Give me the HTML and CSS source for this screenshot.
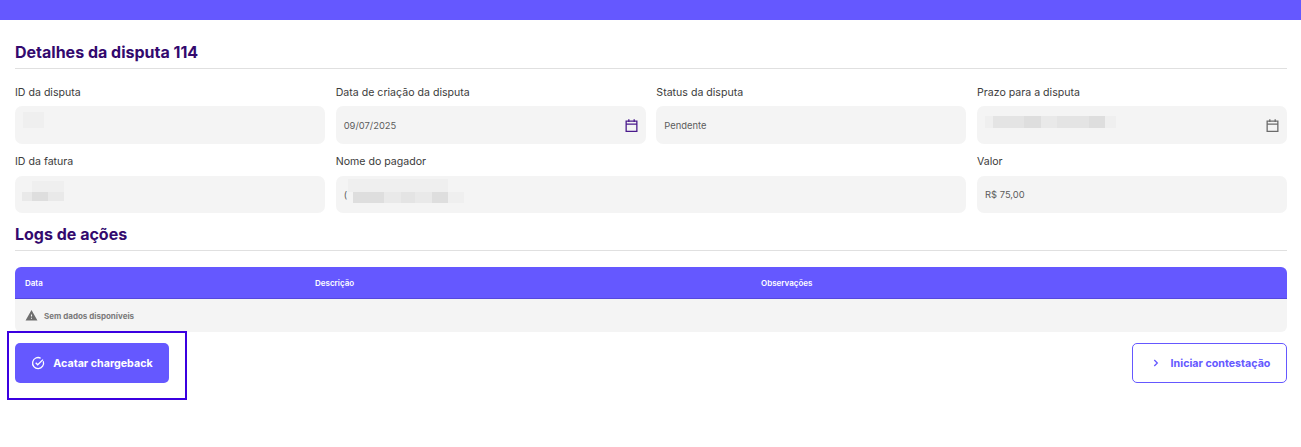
FILE: index.html
```html
<!DOCTYPE html>
<html lang="pt-BR">
<head>
    <meta charset="UTF-8">
    <meta name="viewport" content="width=device-width, initial-scale=1.0">
    <title>Detalhes da disputa</title>
    <link rel="stylesheet" href="styles.css">
</head>
<body>
    <header class="topbar"></header>

    <main class="content">
        <h2 class="section-title">Detalhes da disputa 114</h2>

        <div class="fields">
            <div class="field">
                <label>ID da disputa</label>
                <div class="input">
                    <div class="blur blur-id">
                        <div class="blur-row h16"><i class="b0 w21"></i></div>
                    </div>
                </div>
            </div>
            <div class="field">
                <label>Data de criação da disputa</label>
                <div class="input">
                    <span>09/07/2025</span>
                    <svg class="calendar calendar-on" viewBox="0 0 14 14"><path d="M2 3h10v9.500H2zM2 5.800h10M4.500 1.200v2.500M9.500 1.200v2.500"/></svg>
                </div>
            </div>
            <div class="field">
                <label>Status da disputa</label>
                <div class="input"><span>Pendente</span></div>
            </div>
            <div class="field">
                <label>Prazo para a disputa</label>
                <div class="input">
                    <div class="blur blur-prazo">
                        <div class="blur-row h12"><i class="b0 w8"></i><i class="b1 w31"></i><i class="b2 w17"></i><i class="b3 w16"></i><i class="b1 w32"></i><i class="b2 w16"></i><i class="b0 w11"></i></div>
                    </div>
                    <svg class="calendar" viewBox="0 0 14 14"><path d="M2 3h10v9.500H2zM2 5.800h10M4.500 1.200v2.500M9.500 1.200v2.500"/></svg>
                </div>
            </div>
            <div class="field">
                <label>ID da fatura</label>
                <div class="input input-low">
                    <div class="blur blur-fatura">
                        <div class="blur-row h11"><i class="w10"></i><i class="b0 w32"></i></div>
                        <div class="blur-row h9"><i class="b3 w10"></i><i class="b2 w16"></i><i class="b3 w16"></i></div>
                    </div>
                </div>
            </div>
            <div class="field span-2">
                <label>Nome do pagador</label>
                <div class="input input-low">
                    <span class="payer">(</span>
                    <div class="blur blur-payer">
                        <div class="blur-row h13"><i class="b0 w100"></i></div>
                        <div class="blur-row h11"><i class="w5"></i><i class="b2 w31"></i><i class="b3 w17"></i><i class="b1 w14"></i><i class="b3 w17"></i><i class="b2 w16"></i><i class="b0 w16"></i></div>
                    </div>
                </div>
            </div>
            <div class="field">
                <label>Valor</label>
                <div class="input input-low"><span>R$ 75,00</span></div>
            </div>
        </div>

        <h2 class="section-title logs-title">Logs de ações</h2>

        <div class="table">
            <div class="table-head">
                <span class="col-date">Data</span>
                <span class="col-desc">Descrição</span>
                <span>Observações</span>
            </div>
            <div class="table-empty">
                <svg class="warn" viewBox="0 0 24 24"><path d="M1 21h22L12 2 1 21zm12-3h-2v-2h2v2zm0-4h-2v-4h2v4z"/></svg>
                <span>Sem dados disponíveis</span>
            </div>
        </div>

        <div class="actions">
            <div class="highlight">
                <button class="btn btn-primary">
                    <svg class="btn-icon" viewBox="0 0 14 14"><path d="M12.300 5.300A5.500 5.500 0 1 1 9.700 2.200M4.700 6.800l2 2L12 3.600"/></svg>
                    Acatar chargeback
                </button>
            </div>
            <button class="btn btn-outline">
                <svg class="btn-icon" viewBox="0 0 14 14"><path d="M5.300 4l3 3-3 3"/></svg>
                Iniciar contestação
            </button>
        </div>
    </main>
</body>
</html>
```

FILE: styles.css
```css
* {
    box-sizing: border-box;
}
body {
    margin: 0;
    background-color: #fff;
    color: #333;
    font-family: Inter, "Liberation Sans", sans-serif;
}
.topbar {
    height: 20px;
    background-color: #6558ff;
}
.content {
    padding: 22px 14px 0 15px;
}
.section-title {
    margin: 0;
    padding-bottom: 6px;
    height: 27px;
    font-size: 16px;
    line-height: 20px;
    font-weight: 700;
    color: #33096e;
    border-bottom: 1px solid #e0e0e0;
}
.logs-title {
    margin-top: 11px;
}
.fields {
    display: grid;
    grid-template-columns: repeat(4, 1fr);
    column-gap: 10.67px;
    row-gap: 8px;
    margin-top: 14px;
}
.field label {
    display: block;
    height: 23px;
    font-size: 10.600px;
    line-height: 20px;
    color: #3c3c3c;
}
.field:nth-child(n+5) label {
    height: 24px;
}
.span-2 {
    grid-column: span 2;
}
.input {
    display: flex;
    align-items: center;
    justify-content: space-between;
    height: 38px;
    padding: 0 7px 0 8px;
    background-color: #f4f4f4;
    border-radius: 7px;
    font-size: 9.400px;
    color: #5c5c5c;
}
.input-low {
    height: 37px;
    justify-content: flex-start;
}
/* tarjas que escondem os dados do cliente */
.blur {
    align-self: flex-start;
}
.blur-id {
    margin-top: 6px;
}
.blur-prazo {
    margin-top: 10px;
}
.blur-fatura {
    margin-top: 5px;
    margin-left: -1px;
}
.blur-payer {
    margin-top: 3px;
}
.blur-row {
    display: flex;
}
.blur-row i {
    display: block;
}
.b0 { background-color: #efefef; }
.b1 { background-color: #e4e4e4; }
.b2 { background-color: #dedede; }
.b3 { background-color: #e9e9e9; }
.h9 { height: 9px; }
.h11 { height: 11px; }
.h12 { height: 12px; }
.h13 { height: 13px; }
.h16 { height: 16px; }
.w5 { width: 5px; }
.w8 { width: 8px; }
.w10 { width: 10px; }
.w11 { width: 11px; }
.w14 { width: 14px; }
.w16 { width: 16px; }
.w17 { width: 17px; }
.w21 { width: 21px; }
.w31 { width: 31px; }
.w32 { width: 32px; }
.w100 { width: 100px; }
.payer {
    width: 4px;
}
.calendar {
    width: 15px;
    height: 15px;
    fill: none;
    stroke: #6b6b6b;
    stroke-width: 1.200;
}
.calendar-on {
    stroke: #4a1a8c;
}
.table {
    margin-top: 16px;
    border-radius: 6px;
    overflow: hidden;
    background-color: #f4f4f4;
}
.table-head {
    display: flex;
    align-items: center;
    height: 32px;
    padding-left: 10px;
    background-color: #6558ff;
    border-bottom: 1px solid #5548dd;
    color: #fff;
    font-size: 8px;
    font-weight: 600;
}
.col-date {
    width: 290px;
}
.col-desc {
    width: 446px;
}
.table-empty {
    display: flex;
    align-items: center;
    gap: 6px;
    height: 33px;
    padding-left: 10px;
    color: #7a7a7a;
    font-size: 8px;
    font-weight: 700;
}
.warn {
    width: 13px;
    height: 13px;
    fill: #6f6f6f;
}
.actions {
    display: flex;
    justify-content: space-between;
    align-items: flex-start;
}
.highlight {
    margin-top: -1px;
    margin-left: -8px;
    padding: 10px 16px 15px 6px;
    border: 2px solid #3b00e0;
}
.actions > .btn-outline {
    margin-top: 11px;
}
.btn {
    display: flex;
    align-items: center;
    justify-content: center;
    gap: 8px;
    height: 40px;
    border-radius: 5px;
    font-family: inherit;
    font-size: 10.700px;
    font-weight: 700;
}
.btn-primary {
    width: 154px;
    background-color: #6558ff;
    border: 0;
    color: #fff;
}
.btn-outline {
    width: 155px;
    background-color: #fff;
    border: 1px solid #6558ff;
    color: #6558ff;
}
.btn-icon {
    width: 14px;
    height: 14px;
    fill: none;
    stroke: currentColor;
    stroke-width: 1.300;
}
```
